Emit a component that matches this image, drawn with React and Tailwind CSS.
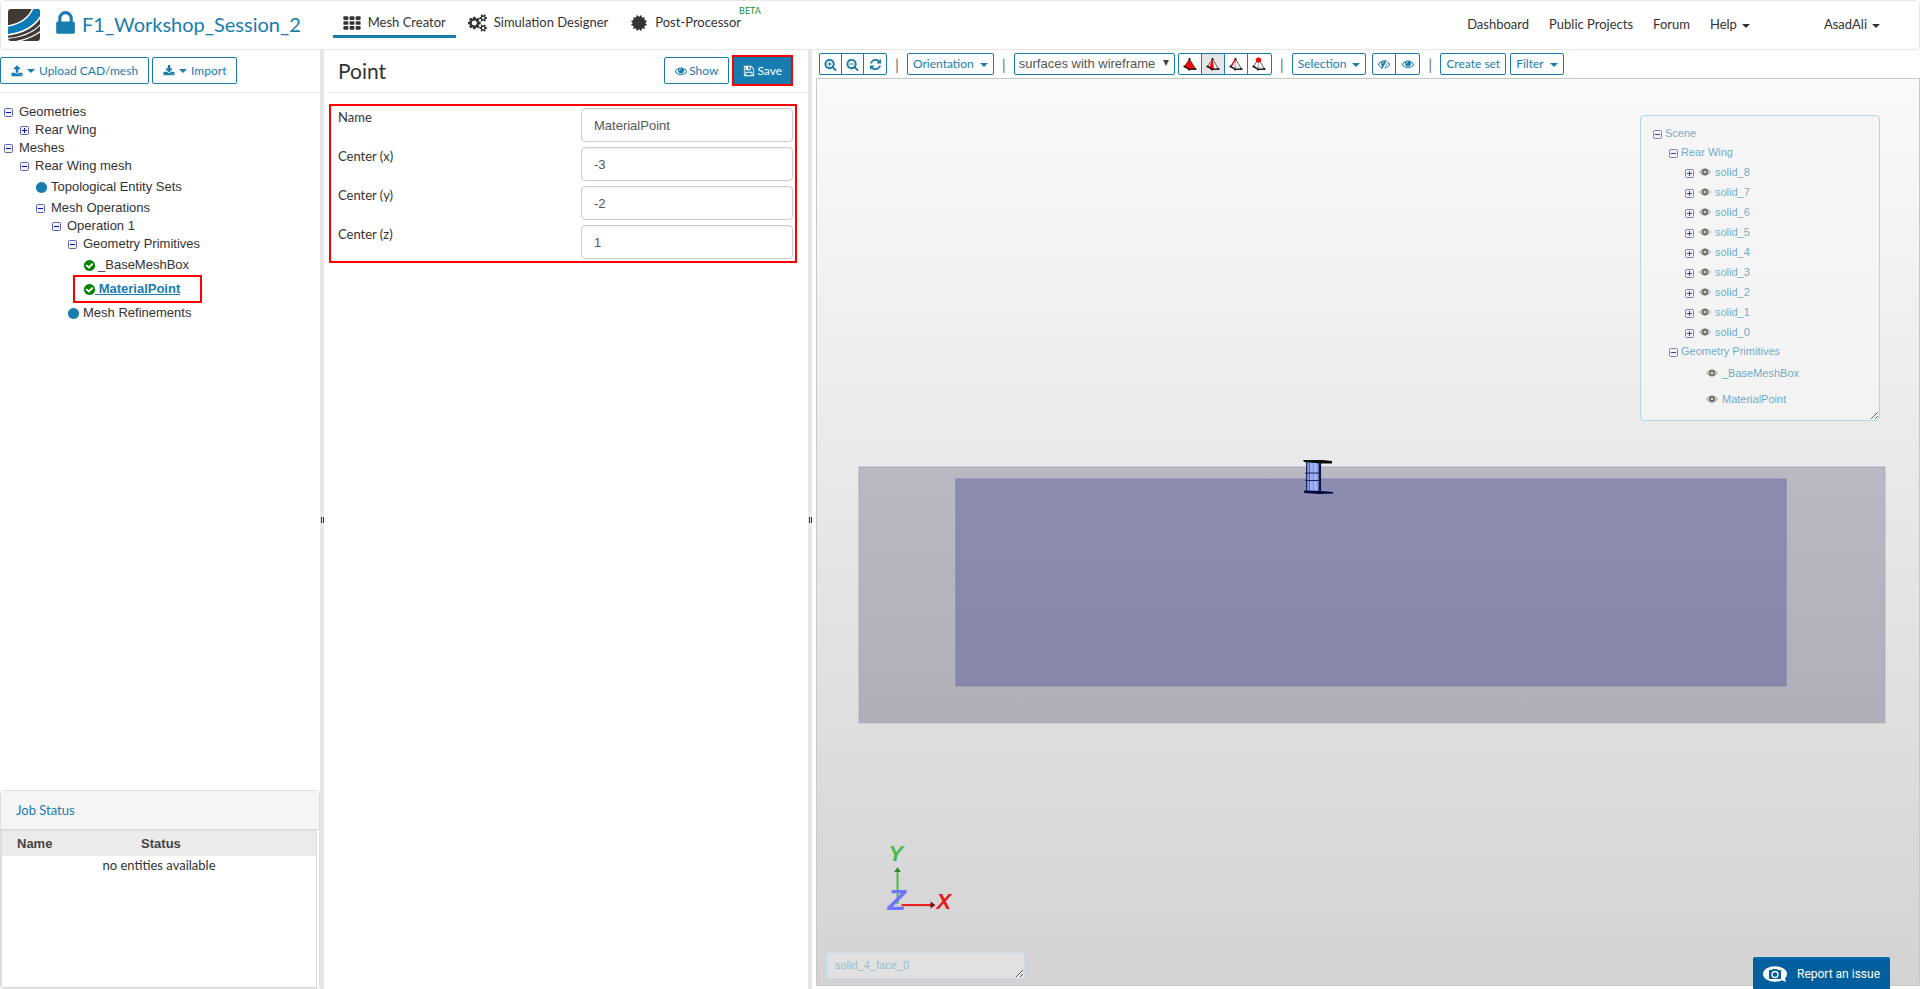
import clsx from "clsx";

// Font Awesome 4 outlines, drawn on a 1792 unit grid
const ICONS = {
  eye: "M1664 960q-152-236-381-353 61 104 61 225 0 185-131.5 316.5t-316.5 131.5-316.5-131.5-131.5-316.5q0-121 61-225-229 117-381 353 133 205 333.5 326.5t434.5 121.5 434.5-121.5 333.5-326.5zm-720-384q0-20-14-34t-34-14q-125 0-214.5 89.5t-89.5 214.5q0 20 14 34t34 14 34-14 14-34q0-86 61-147t147-61q20 0 34-14t14-34zm848 384q0 34-20 69-140 230-376.5 368.5t-499.5 138.5-499.5-139-376.5-368q-20-35-20-69t20-69q140-229 376.5-368t499.5-139 499.5 139 376.5 368q20 35 20 69z",
  eyeSlash:
    "M555 1335l78-141q-87-63-136-159t-49-203q0-121 61-225-229 117-381 353 167 258 427 375zm389-759q0-20-14-34t-34-14q-125 0-214.5 89.5t-89.5 214.5q0 20 14 34t34 14 34-14 14-34q0-86 61-147t147-61q20 0 34-14t14-34zm363-191q0 7-1 9-106 189-316 567t-315 566l-49 89q-10 16-28 16-12 0-134-70-16-10-16-28 0-12 44-87-143-65-263.5-173t-208.5-245q-20-31-20-69t20-69q153-235 380-371t496-136q89 0 180 17l54-97q10-16 28-16 5 0 18 6t31 15.5 33 18.5 31.5 18.5 19.5 11.5q16 10 16 27zm37 447q0 139-79 253.5t-209 164.5l280-502q8 45 8 84zm448 128q0 35-20 69-39 64-109 145-150 172-347.5 267t-419.5 95l74-132q212-18 392.5-137t301.5-307q-115-179-282-294l63-112q95 64 182.5 153t144.5 184q20 34 20 69z",
  upload:
    "M1344 1472q0-26-19-45t-45-19-45 19-19 45 19 45 45 19 45-19 19-45zm256 0q0-26-19-45t-45-19-45 19-19 45 19 45 45 19 45-19 19-45zm128-224v320q0 40-28 68t-68 28h-1472q-40 0-68-28t-28-68v-320q0-40 28-68t68-28h427q21 56 70.5 92t110.5 36h256q61 0 110.5-36t70.5-92h427q40 0 68 28t28 68zm-325-648q-17 40-59 40h-256v448q0 26-19 45t-45 19h-256q-26 0-45-19t-19-45v-448h-256q-42 0-59-40-17-39 14-69l448-448q18-19 45-19t45 19l448 448q31 30 14 69z",
  download:
    "M1344 1344q0-26-19-45t-45-19-45 19-19 45 19 45 45 19 45-19 19-45zm256 0q0-26-19-45t-45-19-45 19-19 45 19 45 45 19 45-19 19-45zm128-224v320q0 40-28 68t-68 28h-1472q-40 0-68-28t-28-68v-320q0-40 28-68t68-28h465l135 136q58 56 136 56t136-56l136-136h464q40 0 68 28t28 68zm-325-569q17 41-14 70l-448 448q-18 19-45 19t-45-19l-448-448q-31-29-14-70 17-39 59-39h256v-448q0-26 19-45t45-19h256q26 0 45 19t19 45v448h256q42 0 59 39z",
  refresh:
    "M1639 1056q0 5-1 7-64 268-268 434.5t-478 166.5q-146 0-282.5-55t-243.5-157l-129 129q-19 19-45 19t-45-19-19-45v-448q0-26 19-45t45-19h448q26 0 45 19t19 45-19 45l-137 137q71 66 161 102t187 36q134 0 250-65t186-179q11-17 53-117 8-23 30-23h192q13 0 22.5 9.5t9.5 22.5zm25-800v448q0 26-19 45t-45 19h-448q-26 0-45-19t-19-45 19-45l138-138q-148-137-349-137-134 0-250 65t-186 179q-11 17-53 117-8 23-30 23h-199q-13 0-22.5-9.5t-9.5-22.5v-7q65-268 270-434.5t480-166.5q146 0 284 55.5t245 156.5l130-129q19-19 45-19t45 19 19 45z",
  zoomIn:
    "M1088 800v64q0 13-9.5 22.5t-22.5 9.5h-224v224q0 13-9.5 22.5t-22.5 9.5h-64q-13 0-22.5-9.5t-9.5-22.5v-224h-224q-13 0-22.5-9.5t-9.5-22.5v-64q0-13 9.5-22.5t22.5-9.5h224v-224q0-13 9.5-22.5t22.5-9.5h64q13 0 22.5 9.5t9.5 22.5v224h224q13 0 22.5 9.5t9.5 22.5zm128 32q0-185-131.5-316.5t-316.5-131.5-316.5 131.5-131.5 316.5 131.5 316.5 316.5 131.5 316.5-131.5 131.5-316.5zm512 832q0 53-37.5 90.5t-90.5 37.5q-54 0-90-38l-343-342q-179 124-399 124-143 0-273.5-55.5t-225-150-150-225-55.5-273.5 55.5-273.5 150-225 225-150 273.5-55.5 273.5 55.5 225 150 150 225 55.5 273.5q0 220-124 399l343 343q37 37 37 90z",
  zoomOut:
    "M1088 800v64q0 13-9.5 22.5t-22.5 9.5h-576q-13 0-22.5-9.5t-9.5-22.5v-64q0-13 9.5-22.5t22.5-9.5h576q13 0 22.5 9.5t9.5 22.5zm128 32q0-185-131.5-316.5t-316.5-131.5-316.5 131.5-131.5 316.5 131.5 316.5 316.5 131.5 316.5-131.5 131.5-316.5zm512 832q0 53-37.5 90.5t-90.5 37.5q-54 0-90-38l-343-342q-179 124-399 124-143 0-273.5-55.5t-225-150-150-225-55.5-273.5 55.5-273.5 150-225 225-150 273.5-55.5 273.5 55.5 225 150 150 225 55.5 273.5q0 220-124 399l343 343q37 37 37 90z",
  lock: "M640 768h512v-192q0-106-75-181t-181-75-181 75-75 181v192zm832 96v576q0 40-28 68t-68 28h-960q-40 0-68-28t-28-68v-576q0-40 28-68t68-28h32v-192q0-184 132-316t316-132 316 132 132 316v192h32q40 0 68 28t28 68z",
  check:
    "M1412 734q0-28-18-46l-91-90q-19-19-45-19t-45 19l-408 407-226-226q-19-19-45-19t-45 19l-91 90q-18 18-18 46 0 27 18 45l362 362q19 19 45 19 27 0 46-19l543-543q18-18 18-45zm252 162q0 209-103 385.5t-279.5 279.5-385.5 103-385.5-103-279.5-279.5-103-385.5 103-385.5 279.5-279.5 385.5-103 385.5 103 279.5 279.5 103 385.5z",
  circle:
    "M1664 896q0 209-103 385.5t-279.5 279.5-385.5 103-385.5-103-279.5-279.5-103-385.5 103-385.5 279.5-279.5 385.5-103 385.5 103 279.5 279.5 103 385.5z",
  save: "M512 1536h768v-384h-768v384zm896 0h128v-896q0-14-10-38.5t-20-34.5l-281-281q-10-10-34-20t-39-10v416q0 40-28 68t-68 28h-576q-40 0-68-28t-28-68v-416h-128v1280h128v-416q0-40 28-68t68-28h832q40 0 68 28t28 68v416zm-384-928v-320q0-13-9.5-22.5t-22.5-9.5h-192q-13 0-22.5 9.5t-9.5 22.5v320q0 13 9.5 22.5t22.5 9.5h192q13 0 22.5-9.5t9.5-22.5zm640 32v928q0 40-28 68t-68 28h-1344q-40 0-68-28t-28-68v-1344q0-40 28-68t68-28h928q40 0 88 20t76 48l280 280q28 28 48 76t20 88z",
  certificate:
    "M1504 896l138 135q30 28 20 70-12 41-52 51l-188 48 53 186q12 41-19 70-29 31-70 19l-186-53-48 188q-10 40-51 52-12 2-19 2-31 0-51-22l-135-138-135 138q-28 30-70 20-41-11-51-52l-48-188-186 53q-41 12-70-19-31-29-19-70l53-186-188-48q-40-10-52-51-10-42 20-70l138-135-138-135q-30-28-20-70 12-41 52-51l188-48-53-186q-12-41 19-70 29-31 70-19l186 53 48-188q10-41 51-51 41-12 70 19l135 139 135-139q29-30 70-19 41 10 51 51l48 188 186-53q41-12 70 19 31 29 19 70l-53 186 188 48q40 10 52 51 10 42-20 70z",
  cog: "M896 896q0-106-75-181t-181-75-181 75-75 181 75 181 181 75 181-75 75-181zm384-91v185q0 10-7 19.5t-16 10.5l-155 24q-11 35-32 76 34 48 90 115 7 11 7 20 0 12-7 19-23 30-82.5 89.5t-78.5 59.5q-11 0-21-7l-115-90q-37 19-77 31-11 108-23 155-7 24-30 24h-186q-11 0-20-7.5t-10-17.5l-23-153q-34-10-75-31l-118 89q-7 7-20 7-11 0-21-8-144-133-144-160 0-9 7-19 10-14 41-53t47-61q-23-44-35-82l-152-24q-10-1-17-9.5t-7-19.5v-185q0-10 7-19.5t16-10.5l155-24q11-35 32-76-34-48-90-115-7-11-7-20 0-12 7-20 22-30 82-89t79-59q11 0 21 7l115 90q34-18 77-32 11-108 23-154 7-24 30-24h186q11 0 20 7.5t10 17.5l23 153q34 10 75 31l118-89q8-7 20-7 11 0 21 8 144 133 144 160 0 8-7 19-12 16-42 54t-45 60q23 48 34 82l152 23q10 2 17 10.5t7 19.5z",
  smallCog:
    "M1664 1408q0-52-38-90t-90-38-90 38-38 90q0 53 37.5 90.5t90.5 37.5 90.5-37.5 37.5-90.5zm256-70v140q0 16-149 31-12 27-30 52 51 113 51 138 0 4-4 7-122 71-124 71-8 0-46-47t-52-68q-20 2-30 2t-30-2q-14 21-52 68t-46 47q-2 0-124-71-4-3-4-7 0-25 51-138-18-25-30-52-149-15-149-31v-140q0-16 149-31 13-29 30-52-51-113-51-138 0-4 4-7 4-2 35-20t59-34 30-16q8 0 46 46.5t52 67.5q20-2 30-2t30 2q51-71 92-112l6-2q4 0 124 70 4 3 4 7 0 25-51 138 17 23 30 52 149 15 149 31z",
};

function Icon({ name, className }) {
  return (
    <svg viewBox="0 0 1792 1792" className={clsx("shrink-0 fill-current", className)} aria-hidden="true">
      <path d={ICONS[name]} />
    </svg>
  );
}

function GridIcon() {
  return (
    <svg viewBox="0 0 1792 1664" className="w-[18px] h-4 fill-current" aria-hidden="true">
      {[0, 640, 1280].map((x) =>
        [128, 640, 1152].map((y) => <rect key={`${x}-${y}`} x={x} y={y} width="512" height="384" rx="96" />)
      )}
    </svg>
  );
}

function CogsIcon() {
  return (
    <svg viewBox="0 0 1920 1792" className="w-[19px] h-[18px] fill-current" aria-hidden="true">
      <path d={ICONS.cog} />
      <path d={ICONS.smallCog} />
      <path d={ICONS.smallCog} transform="translate(0 -1024)" />
    </svg>
  );
}

function Caret({ className }) {
  return (
    <span className={clsx("inline-block border-x-4 border-t-4 border-x-transparent border-t-current", className)} />
  );
}

function Logo() {
  return (
    <svg viewBox="0 0 32 32" className="w-8 h-8" aria-hidden="true">
      <defs>
        <clipPath id="logo-clip">
          <rect width="32" height="32" rx="3" />
        </clipPath>
      </defs>
      <g clipPath="url(#logo-clip)">
        <rect width="32" height="32" fill="#3f3a36" />
        <path d="M0 17C12 15 21 9 25 0H32V7C26 18 14 24 0 26Z" fill="#0b7bb5" />
        <g fill="none" stroke="#fff">
          <path d="M-1 17.200C12 15 21 9 25 -1" strokeWidth="1.500" />
          <path d="M-1 26C15 24 27 17 33 7" strokeWidth="1.600" />
          <path d="M-1 29.500C15 28 27 22 33 15" strokeWidth="1.300" />
          <path d="M6 33C17 31 27 27 33 22" strokeWidth="1.300" />
        </g>
        <path d="M-1 17.500C1 20 0 23 -1 25Z" fill="#fff" />
      </g>
    </svg>
  );
}

function Toggle({ open, className }) {
  return (
    <svg viewBox="0 0 9 9" className={clsx("w-[9px] h-[9px] shrink-0", className)} aria-hidden="true">
      <rect x=".5" y=".5" width="8" height="8" rx="1" fill="#f2f2fa" stroke="#5a68b4" />
      <path d={open ? "M2 4.500H7" : "M2 4.500H7M4.500 2V7"} stroke="#0a0ab4" />
    </svg>
  );
}

const TABS = [
  { label: "Mesh Creator", icon: <GridIcon />, active: true },
  { label: "Simulation Designer", icon: <CogsIcon /> },
  { label: "Post-Processor", icon: <Icon name="certificate" className="w-[18px] h-[18px]" />, beta: true },
];

function Header() {
  return (
    <header className="flex items-center h-[50px] shrink-0 pl-[7px] pr-[39px] border border-[#e7e7e7] rounded text-[13px] text-[#333]">
      <Logo />
      <a href="#project" className="flex items-center ml-[11px] text-xl text-[#187caf]">
        <Icon name="lock" className="w-[29px] h-[29px] -mt-1" />
        <span className="ml-[2px] -mt-[2px]">F1_Workshop_Session_2</span>
      </a>
      <nav className="flex self-start gap-[2px] ml-8 pt-[7px]">
        {TABS.map((tab) => (
          <a
            key={tab.label}
            href="#tab"
            className={clsx(
              "relative flex items-center gap-[7px] h-[30px] pt-[2px] px-[10px] border-b-3",
              tab.active ? "border-[#187caf]" : "border-transparent"
            )}
          >
            {tab.icon}
            {tab.label}
            {tab.beta && (
              <sup className="absolute -top-[3px] left-full -ml-3 text-[9px] leading-3 text-[#149030]">BETA</sup>
            )}
          </a>
        ))}
      </nav>
      <nav className="flex items-center gap-5 ml-auto">
        <a href="#dashboard">Dashboard</a>
        <a href="#projects">Public Projects</a>
        <a href="#forum">Forum</a>
        <button type="button" className="flex items-center gap-[5px]">
          Help <Caret className="mt-[2px]" />
        </button>
        <button type="button" className="flex items-center gap-[5px] ml-[54px]">
          AsadAli <Caret className="mt-[2px]" />
        </button>
      </nav>
    </header>
  );
}

const TREE = [
  { label: "Geometries", level: 0, kind: "open" },
  { label: "Rear Wing", level: 1, kind: "closed" },
  { label: "Meshes", level: 0, kind: "open" },
  { label: "Rear Wing mesh", level: 1, kind: "open" },
  { label: "Topological Entity Sets", level: 2, kind: "dot" },
  { label: "Mesh Operations", level: 2, kind: "open" },
  { label: "Operation 1", level: 3, kind: "open" },
  { label: "Geometry Primitives", level: 4, kind: "open" },
  { label: "_BaseMeshBox", level: 5, kind: "check" },
  { label: "MaterialPoint", level: 5, kind: "check", selected: true },
  { label: "Mesh Refinements", level: 4, kind: "dot" },
];

const INDENT = ["pl-0", "pl-4", "pl-8", "pl-12", "pl-16", "pl-20"];

function TreeRow({ item }) {
  const branch = item.kind === "open" || item.kind === "closed";
  return (
    <li className={clsx("flex items-center", INDENT[item.level], branch ? "h-[18px]" : "h-6")}>
      {branch && (
        <button type="button" aria-label={`Toggle ${item.label}`} className="mr-[6px]">
          <Toggle open={item.kind === "open"} />
        </button>
      )}
      {item.kind === "dot" && <Icon name="circle" className="w-[13px] h-[13px] -ml-px mr-[3px] text-[#187caf]" />}
      {item.selected ? (
        <a href="#node" className="relative flex items-center font-bold text-[#187caf]">
          <Icon name="check" className="w-[13px] h-[13px] -ml-px text-[#008000]" />
          <span className="-ml-px whitespace-pre underline"> {item.label}</span>
          <span className="absolute -inset-y-1 -left-[11px] -right-[22px] border-2 border-[#f00]" />
        </a>
      ) : (
        <a href="#node" className="flex items-center">
          {item.kind === "check" && <Icon name="check" className="w-[13px] h-[13px] -ml-px mr-[2px] text-[#008000]" />}
          {item.label}
        </a>
      )}
    </li>
  );
}

function Sidebar() {
  return (
    <aside className="flex flex-col w-80 shrink-0">
      <div className="flex gap-[3px] h-[43px] shrink-0 pt-[7px] border-b border-[#e7e7e7] text-xs">
        <button type="button" className="flex items-center h-[27px] px-[10px] border border-[#187caf] rounded-xs text-[#187caf]">
          <Icon name="upload" className="w-3 h-3" />
          <Caret className="mx-1" />
          Upload CAD/mesh
        </button>
        <button type="button" className="flex items-center h-[27px] px-[10px] border border-[#187caf] rounded-xs text-[#187caf]">
          <Icon name="download" className="w-3 h-3" />
          <Caret className="mx-1" />
          Import
        </button>
      </div>
      <ul className="grow pt-[10px] pl-1 font-['Liberation_Sans',sans-serif] text-[13px] text-[#333]">
        {TREE.map((item) => (
          <TreeRow key={item.label} item={item} />
        ))}
      </ul>
      <section className="flex flex-col h-[199px] border border-[#ddd] rounded">
        <h2 className="h-[39px] shrink-0 px-[15px] border-b border-[#ddd] bg-[#f5f5f5] text-[13px] leading-[38px] text-[#187caf]">
          Job Status
        </h2>
        <div className="grow mr-[2px] border border-[#ddd]">
          <table className="w-full table-fixed text-[13px] leading-[18px] text-[#333]">
            <thead>
              <tr className="h-[25px] bg-[#ebebeb] font-['Liberation_Sans',sans-serif] text-[#444]">
                <th className="w-1/3 pl-[15px] text-left">Name</th>
                <th className="w-1/3 pl-1 text-center">Status</th>
                <th className="w-1/3" />
              </tr>
            </thead>
            <tbody>
              <tr>
                <td colSpan="3" className="text-center">
                  no entities available
                </td>
              </tr>
            </tbody>
          </table>
        </div>
      </section>
    </aside>
  );
}

function Splitter() {
  return (
    <div className="flex items-center justify-center gap-px w-1 shrink-0 bg-[#e7e7e7]">
      <span className="w-px h-[6px] bg-[#333]" />
      <span className="w-px h-[6px] bg-[#333]" />
    </div>
  );
}

const FIELDS = [
  { id: "name", label: "Name", value: "MaterialPoint" },
  { id: "center-x", label: "Center (x)", value: "-3" },
  { id: "center-y", label: "Center (y)", value: "-2" },
  { id: "center-z", label: "Center (z)", value: "1" },
];

function PointForm() {
  return (
    <main className="w-[484px] shrink-0">
      <div className="flex items-start h-[43px] ml-1 pt-[5px] pr-[15px] border-b border-[#eee]">
        <h1 className="pl-[10px] text-[21px] leading-8 text-[#333]">Point</h1>
        <button
          type="button"
          className="flex items-center gap-[2px] h-[27px] mt-[2px] ml-auto px-[10px] border border-[#187caf] rounded-xs text-xs text-[#187caf]"
        >
          <Icon name="eye" className="w-3 h-3" />
          Show
        </button>
        <button
          type="button"
          className="flex items-center gap-[2px] h-[31px] ml-[3px] px-[9px] border-2 border-[#f00] bg-[#187caf] text-xs text-white"
        >
          <Icon name="save" className="w-3 h-3" />
          Save
        </button>
      </div>
      <form className="flex flex-col gap-[5px] mt-[11px] ml-[5px] mr-[11px] py-[2px] pl-[7px] pr-[2px] border-2 border-[#f00]">
        {FIELDS.map((field) => (
          <div key={field.id} className="flex items-start">
            <label htmlFor={field.id} className="grow text-[13px] leading-[18px] text-[#333]">
              {field.label}
            </label>
            <input
              id={field.id}
              type="text"
              defaultValue={field.value}
              className="w-[212px] h-[34px] px-3 border border-[#ccc] rounded bg-white font-['Liberation_Sans',sans-serif] text-[13px] text-[#555] inset-shadow-2xs"
            />
          </div>
        ))}
      </form>
    </main>
  );
}

// The same tetrahedron four times, with a different part marked in red
function Tetra({ mode }) {
  return (
    <svg viewBox="0 0 14 14" className="w-[14px] h-[14px]" fill="none" aria-hidden="true">
      <path d="M6.500 2L1.500 9.500L6 12.500L12.500 12Z" fill={mode === "volume" ? "#f00" : "#fff"} stroke="#333" strokeWidth=".800" />
      <path d="M6.500 2L6 12.500M1.500 9.500L12.500 12" stroke={mode === "volume" ? "#f00" : "#777"} strokeWidth=".700" />
      {mode === "face" && <path d="M6.500 1.500L3 11L8 12.500Z" fill="#f00" />}
      {mode === "edge" && <path d="M6.500 2L2.500 9" stroke="#f00" strokeWidth="1.300" />}
      <path d="M1.500 9.500L6 12.500L12.500 12" stroke="#111" strokeWidth="1.200" />
      {[[1.5, 9.5], [6, 12.5], [12.5, 12], [6.5, 2]].map(([x, y]) => (
        <circle key={`${x}-${y}`} cx={x} cy={y} r="1.100" fill="#111" />
      ))}
      {mode === "vertex" && <circle cx="6.500" cy="3" r="2.600" fill="#f00" />}
    </svg>
  );
}

function ToolGroup({ children }) {
  return (
    <div className="flex h-[22px] divide-x divide-[#187caf] overflow-hidden border border-[#187caf] rounded-xs text-[#187caf]">
      {children}
    </div>
  );
}

function ToolButton({ label, caret }) {
  return (
    <button type="button" className="flex items-center gap-[6px] h-[22px] px-[5px] border border-[#187caf] rounded-xs text-xs text-[#187caf]">
      {label}
      {caret && <Caret className="mt-px" />}
    </button>
  );
}

function Divider() {
  return <span className="w-5 text-center text-base leading-5 text-[#777]">|</span>;
}

function Toolbar() {
  return (
    <div className="flex items-center h-7 pl-[3px]">
      <ToolGroup>
        {["zoomIn", "zoomOut", "refresh"].map((name) => (
          <button key={name} type="button" aria-label={name} className="grid place-items-center w-[22px]">
            <Icon name={name} className="w-[13px] h-[13px]" />
          </button>
        ))}
      </ToolGroup>
      <Divider />
      <ToolButton label="Orientation" caret />
      <Divider />
      <div className="relative mr-[3px]">
        <select
          aria-label="Render mode"
          className="block w-[161px] h-[22px] pl-1 appearance-none border border-[#187caf] rounded-xs bg-white font-['Liberation_Sans',sans-serif] text-[13px] leading-5 text-[#555]"
        >
          <option>surfaces with wireframe</option>
        </select>
        <span className="absolute top-[7px] right-[6px] border-x-3 border-t-6 border-x-transparent border-t-[#444] pointer-events-none" />
      </div>
      <ToolGroup>
        {["volume", "face", "edge", "vertex"].map((mode) => (
          <button
            key={mode}
            type="button"
            aria-label={`Pick ${mode}`}
            className={clsx("grid place-items-center w-[23px]", mode === "face" && "bg-[#e6e6e6] inset-shadow-xs")}
          >
            <Tetra mode={mode} />
          </button>
        ))}
      </ToolGroup>
      <Divider />
      <ToolButton label="Selection" caret />
      <div className="ml-[6px]">
        <ToolGroup>
          {["eyeSlash", "eye"].map((name) => (
            <button key={name} type="button" aria-label={name} className="grid place-items-center w-[23px]">
              <Icon name={name} className="w-3 h-3" />
            </button>
          ))}
        </ToolGroup>
      </div>
      <Divider />
      <div className="flex gap-1">
        <ToolButton label="Create set" />
        <ToolButton label="Filter" caret />
      </div>
    </div>
  );
}

function Viewport() {
  return (
    <svg viewBox="0 0 1102 907" className="absolute inset-0 w-full h-full" aria-hidden="true">
      <defs>
        <linearGradient id="outer" x1="0" y1="0" x2="0" y2="1">
          <stop offset="0" stopColor="#b9b9c3" />
          <stop offset="1" stopColor="#afafb9" />
        </linearGradient>
        <linearGradient id="inner" x1="0" y1="0" x2="0" y2="1">
          <stop offset="0" stopColor="#8c8cb1" />
          <stop offset="1" stopColor="#8787ab" />
        </linearGradient>
        <linearGradient id="wing" x1="0" y1="0" x2="1" y2="0">
          <stop offset="0" stopColor="#6373c4" />
          <stop offset=".300" stopColor="#a9b9f6" />
          <stop offset=".550" stopColor="#8a9aea" />
          <stop offset=".700" stopColor="#b4c4ff" />
          <stop offset="1" stopColor="#3c4a94" />
        </linearGradient>
      </defs>
      <rect x="41.500" y="388.500" width="1027" height="256" fill="url(#outer)" stroke="#a8a8b4" />
      <rect x="138.500" y="400.500" width="831" height="207" fill="url(#inner)" stroke="#8080aa" />
      <g>
        <rect x="489" y="383" width="14" height="30" fill="url(#wing)" />
        <path d="M489.500 383V413" stroke="#1a2350" />
        <path d="M492.500 383V413" stroke="#3c4a94" strokeWidth=".700" />
        <path d="M503 383V413" stroke="#0c1338" strokeWidth="2" />
        <path d="M488 394.500H504M488 402H504" stroke="#141c5c" />
        <path d="M486 381.500H505L515 382.500V385H504L487 383.500Z" fill="#080c08" />
        <path d="M487 412L505 412.500L516 413.500V415L503 415.500L487 414.500Z" fill="#05083c" />
      </g>
      <g className="font-['Liberation_Sans',sans-serif] text-[22px] font-bold italic">
        <path d="M80 794V826" stroke="#45bd45" strokeWidth="2" />
        <path d="M76.500 794L80 789L83.500 794Z" fill="#2f8a38" />
        <path d="M84 827H114" stroke="#e81818" strokeWidth="2" />
        <path d="M113 823.500L118 827L113 830.500Z" fill="#7a1010" />
        <text x="71" y="783" fill="#45bd45">Y</text>
        <text x="119" y="831" fill="#e81818">X</text>
        <text x="70" y="832" fill="#7272ff" className="text-[30px]">Z</text>
      </g>
    </svg>
  );
}

const SOLIDS = ["solid_8", "solid_7", "solid_6", "solid_5", "solid_4", "solid_3", "solid_2", "solid_1", "solid_0"];
const PRIMITIVES = ["_BaseMeshBox", "MaterialPoint"];

function SceneEye({ className }) {
  return (
    <svg viewBox="0 0 12 8" className={clsx("w-3 h-2 shrink-0", className)} aria-hidden="true">
      <path d="M.5 4Q6 -2.500 11.500 4Q6 10.500 .5 4Z" fill="#e4e4e0" stroke="#9a9a94" />
      <circle cx="6" cy="4" r="3.200" fill="#77776f" />
      <circle cx="6" cy="4" r="1" fill="#f2f2f2" />
    </svg>
  );
}

function ScenePanel() {
  return (
    <div className="absolute top-9 right-[39px] w-60 h-[306px] py-2 pl-3 resize overflow-auto border border-[#add8e6] rounded bg-[#f5f5f5]/80 font-['Liberation_Sans',sans-serif] text-[11px] text-[#187caf]/65">
      <ul>
        <li className="flex items-center gap-[3px] h-[19px]">
          <Toggle open className="mt-[2px] opacity-80" />
          Scene
        </li>
        <li className="flex items-center gap-[3px] h-[19px] pl-4">
          <Toggle open className="mt-[2px] opacity-80" />
          Rear Wing
        </li>
        {SOLIDS.map((name) => (
          <li key={name} className="flex items-center h-5 pl-8">
            <Toggle className="mt-[2px] opacity-80" />
            <SceneEye className="ml-[5px] mr-1" />
            {name}
          </li>
        ))}
        <li className="flex items-center gap-[3px] h-[18px] pl-4">
          <Toggle open className="mt-[2px] opacity-80" />
          Geometry Primitives
        </li>
        {PRIMITIVES.map((name) => (
          <li key={name} className="flex items-center gap-1 h-[26px] pl-[53px]">
            <SceneEye />
            {name}
          </li>
        ))}
      </ul>
    </div>
  );
}

function Viewer() {
  return (
    <section className="flex flex-col grow min-w-0 pl-1 pb-[3px]">
      <Toolbar />
      <div className="relative grow border border-[#c8c8c8] bg-linear-to-b from-[#fafafa] to-[#d3d3d3]">
        <Viewport />
        <ScenePanel />
        <div className="absolute bottom-[6px] left-[9px] w-[199px] h-[27px] pl-2 resize overflow-auto border border-[#add8e6]/50 rounded bg-[#f5f5f5]/40 font-['Liberation_Sans',sans-serif] text-[11px] leading-[25px] text-[#187caf]/40">
          solid_4_face_0
        </div>
      </div>
    </section>
  );
}

function ReportButton() {
  return (
    <button
      type="button"
      className="fixed bottom-0 right-[30px] flex items-center gap-[10px] h-8 px-[10px] border-t-2 border-[#006db3] rounded-t-xs bg-[#005f9c] font-[Roboto,sans-serif] text-xs text-white"
    >
      <svg viewBox="0 0 24 16" className="w-6 h-4" aria-hidden="true">
        <ellipse cx="12" cy="8" rx="12" ry="7.800" fill="#fff" />
        <path d="M16 13L23 16L21 10Z" fill="#fff" />
        <path d="M6 4H9L10 3H14L15 4H18V13H6Z" fill="#005f9c" />
        <circle cx="12" cy="8.500" r="3" fill="none" stroke="#fff" strokeWidth="1.300" />
      </svg>
      Report an issue
    </button>
  );
}

export default function App() {
  return (
    <div className="flex flex-col h-screen bg-white font-[Lato,sans-serif]">
      <Header />
      <div className="flex grow min-h-0">
        <Sidebar />
        <Splitter />
        <PointForm />
        <Splitter />
        <Viewer />
      </div>
      <ReportButton />
    </div>
  );
}
